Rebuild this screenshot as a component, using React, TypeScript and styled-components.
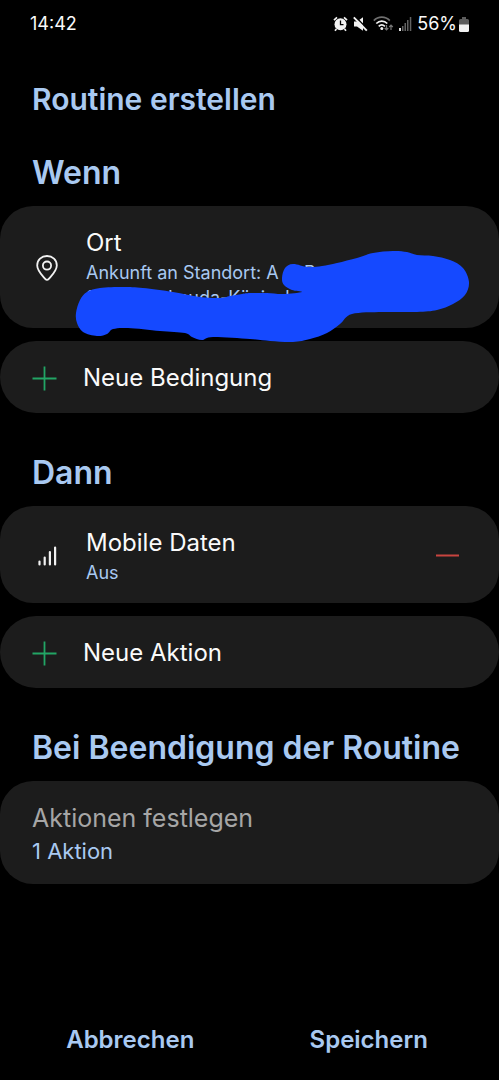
import React from 'react';
import styled, { createGlobalStyle } from 'styled-components';

const GlobalStyle = createGlobalStyle`
  * { box-sizing: border-box; }
  body {
    margin: 0;
    background: #000;
    color: #fafafa;
    font-family: Inter, Roboto, sans-serif;
  }
  button { font-family: inherit; cursor: pointer; }
`;

const Screen = styled.div`
  display: flex;
  flex-direction: column;
  min-height: 100vh;
`;

const StatusBar = styled.header`
  display: flex;
  align-items: center;
  justify-content: space-between;
  height: 48px;
  padding: 0 30px;
  font-size: 18px;
  line-height: 24px;
`;

const StatusIcons = styled.div`
  display: flex;
  align-items: center;
  gap: 5px;
`;

const BatteryLevel = styled.span`
  display: flex;
  align-items: center;
  gap: 2px;
`;

const PageTitle = styled.h1`
  margin: 31px 32px 0;
  color: #a9c9f1;
  font-size: 30px;
  line-height: 40px;
  font-weight: 600;
`;

const Section = styled.section`
  display: flex;
  flex-direction: column;
  gap: 13px;
  margin-top: 40px;
`;

const FirstSection = styled(Section)`
  margin-top: 34px;
`;

const SectionTitle = styled.h2`
  margin: 0 32px;
  color: #a9c9f1;
  font-size: 32px;
  line-height: 40px;
  font-weight: 600;
`;

const Card = styled.div`
  position: relative;
  display: flex;
  align-items: center;
  padding: 20px 32px 18px;
  border-radius: 33px;
  background: #1c1c1c;
`;

const AddButton = styled.button`
  display: flex;
  align-items: center;
  gap: 26px;
  width: 100%;
  padding: 21px 32px 19px;
  border: 0;
  border-radius: 36px;
  background: #1c1c1c;
  color: #fafafa;
  font-size: 24px;
  line-height: 32px;
  text-align: left;
`;

const IconSlot = styled.span`
  display: flex;
  flex: none;
  justify-content: center;
  width: 30px;
  margin-right: 24px;
`;

const Texts = styled.div`
  flex: 1;
  min-width: 0;
`;

const ItemTitle = styled.div<{ $muted?: boolean }>`
  color: ${(p) => (p.$muted ? '#a6a6a6' : '#fafafa')};
  font-size: ${(p) => (p.$muted ? 25 : 24)}px;
  line-height: 34px;
`;

const ItemNote = styled.div<{ $large?: boolean }>`
  color: #a9c9f1;
  font-size: ${(p) => (p.$large ? 22 : 18)}px;
  line-height: ${(p) => (p.$large ? 32 : 25)}px;
  white-space: pre;
`;

const OutcomeCard = styled(Card)`
  padding: 20px 32px 17px;
`;

const RemoveButton = styled.button`
  display: flex;
  padding: 8px;
  border: 0;
  background: none;
`;

const Scribble = styled.svg`
  position: absolute;
  top: 0;
  left: 0;
  z-index: 1;
  overflow: visible;
  pointer-events: none;
`;

const Footer = styled.footer`
  display: flex;
  margin-top: auto;
  padding: 0 11px 20px;
`;

const FooterButton = styled.button`
  flex: 1;
  padding: 0;
  border: 0;
  background: none;
  color: #a9c9f1;
  font-size: 24px;
  line-height: 40px;
  font-weight: 600;
`;

const AlarmIcon = () => (
  <svg width="15" height="16" viewBox="0 0 15 16" aria-label="Wecker">
    <circle cx="7.5" cy="8.3" r="6" fill="#f2f2f2" />
    <path d="M1 4.2 4 1.3M14 4.2 11 1.3M3.4 13l-1.4 1.7M11.6 13l1.4 1.7" stroke="#f2f2f2" strokeWidth="1.7" />
    <path d="M7.5 4.6v4h3" stroke="#000" strokeWidth="1.3" fill="none" />
  </svg>
);

const MuteIcon = () => (
  <svg width="15" height="16" viewBox="0 0 15 16" aria-label="Stumm">
    <path d="M1 5.5h3l6-4.300v13.600l-6-4.300H1z" fill="#f2f2f2" />
    <path d="M2.200.400 15 13.400" stroke="#000" strokeWidth="1.400" />
    <path d="M.800 1.300 13.800 14.600" stroke="#f2f2f2" strokeWidth="1.900" />
  </svg>
);

const WifiIcon = () => (
  <svg width="21" height="16" viewBox="0 0 21 16" fill="none" aria-label="WLAN">
    <path d="M.8 4.6c4.5-4.6 11.5-4.6 16 0" stroke="#6f6f6f" strokeWidth="1.7" />
    <path d="M3.3 7.5c3.2-3.2 7.8-3.2 11 0M5.7 10.3c1.900-1.700 4.300-1.700 6.200 0" stroke="#f2f2f2" strokeWidth="1.7" />
    <circle cx="8.8" cy="12.6" r="1.5" fill="#f2f2f2" />
    <path d="M13.500 9v4.500M11.700 12l1.800 1.900 1.800-1.900M18 14V9.300M16.200 11 18 9.100l1.800 1.900" stroke="#777" strokeWidth="1.2" />
  </svg>
);

const SignalIcon = () => (
  <svg width="13" height="14" viewBox="0 0 13 14" aria-label="Mobilfunk">
    <path d="M0 11h2v3H0z" fill="#e4e4e4" />
    <path d="M3 9h1.500v5H3zM5.500 6H7v8H5.500zM8 3h1.500v11H8zM10.800 0h1.500v14h-1.500z" fill="#626262" />
  </svg>
);

const BatteryIcon = () => (
  <svg width="10" height="15" viewBox="0 0 10 15" aria-hidden="true">
    <path d="M3 0h4v2h1.500A1.500 1.500 0 0 1 10 3.500V8H0V3.500A1.500 1.500 0 0 1 1.500 2H3z" fill="#5c5c5c" />
    <path d="M0 7.500h10v6A1.500 1.500 0 0 1 8.500 15h-7A1.500 1.500 0 0 1 0 13.500z" fill="#f2f2f2" />
  </svg>
);

const PinIcon = () => (
  <svg width="22" height="26" viewBox="0 0 22 26" fill="none" stroke="#f2f2f2" strokeWidth="1.8" aria-hidden="true">
    <path d="M11 1C5.400 1 1.200 5.100 1.200 10.400c0 5.200 4.400 9.300 8.200 13.700.9 1 2.300 1 3.200 0 3.800-4.400 8.200-8.500 8.200-13.700C20.800 5.100 16.600 1 11 1z" />
    <circle cx="11" cy="10.6" r="4.1" />
  </svg>
);

const BarsIcon = () => (
  <svg width="19" height="20" viewBox="0 0 19 20" stroke="#f2f2f2" strokeWidth="2.2" strokeLinecap="round" aria-hidden="true">
    <path d="M1.500 15.500v3M6.700 11.500v7M11.900 6v12.500M17.100 1.500v17" />
  </svg>
);

const PlusIcon = () => (
  <svg width="25" height="25" viewBox="0 0 25 25" stroke="#22a565" strokeWidth="1.8" aria-hidden="true">
    <path d="M12.500.500v24M.500 12.500h24" />
  </svg>
);

const MinusIcon = () => (
  <svg width="23" height="3" viewBox="0 0 23 3" aria-hidden="true">
    <path d="M0 1.500h23" stroke="#c8443f" strokeWidth="2" />
  </svg>
);

const scribbleOutline: [number, number][] = [
  [76, 107], [80, 94], [87, 86], [100, 82], [123, 81], [143, 82], [173, 86], [200, 91], [220, 92],
  [230, 90], [242, 88], [250, 87], [267, 87], [283, 88], [302, 86], [292, 84], [284, 79], [282, 72],
  [285, 62], [293, 58], [308, 61], [322, 60], [337, 57], [357, 52], [373, 47], [393, 45], [407, 46],
  [417, 49], [433, 50], [450, 54], [463, 62], [469, 76], [465, 89], [453, 98], [437, 104],
  [417, 106], [383, 106], [352, 108], [340, 118], [327, 127], [310, 133], [293, 136], [270, 135],
  [250, 133], [213, 131], [202, 134], [192, 131], [185, 127], [160, 125], [128, 122], [113, 123],
  [107, 128], [97, 130], [83, 126], [77, 117],
];

const smoothClosed = (pts: [number, number][]) => {
  const n = pts.length;
  let d = `M${pts[0][0]} ${pts[0][1]}`;
  for (let i = 0; i < n; i++) {
    const a = pts[(i + n - 1) % n];
    const b = pts[i];
    const c = pts[(i + 1) % n];
    const e = pts[(i + 2) % n];
    d += `C${b[0] + (c[0] - a[0]) / 6} ${b[1] + (c[1] - a[1]) / 6} ${c[0] - (e[0] - b[0]) / 6} ${c[1] - (e[1] - b[1]) / 6} ${c[0]} ${c[1]}`;
  }
  return `${d}Z`;
};

export default function App() {
  return (
    <>
      <GlobalStyle />
      <Screen>
        <StatusBar>
          <time>14:42</time>
          <StatusIcons>
            <AlarmIcon />
            <MuteIcon />
            <WifiIcon />
            <SignalIcon />
            <BatteryLevel>
              56%
              <BatteryIcon />
            </BatteryLevel>
          </StatusIcons>
        </StatusBar>

        <PageTitle>Routine erstellen</PageTitle>

        <FirstSection>
          <SectionTitle>Wenn</SectionTitle>
          <Card>
            <IconSlot>
              <PinIcon />
            </IconSlot>
            <Texts>
              <ItemTitle>Ort</ItemTitle>
              <ItemNote>
                {'Ankunft an Standort: A     B\n9              Lauda-Kö  i    h'}
              </ItemNote>
            </Texts>
            <Scribble width="470" height="136" aria-hidden="true">
              <path d={smoothClosed(scribbleOutline)} fill="#1549ff" />
            </Scribble>
          </Card>
          <AddButton type="button">
            <PlusIcon />
            Neue Bedingung
          </AddButton>
        </FirstSection>

        <Section>
          <SectionTitle>Dann</SectionTitle>
          <Card>
            <IconSlot>
              <BarsIcon />
            </IconSlot>
            <Texts>
              <ItemTitle>Mobile Daten</ItemTitle>
              <ItemNote>Aus</ItemNote>
            </Texts>
            <RemoveButton type="button" aria-label="Mobile Daten entfernen">
              <MinusIcon />
            </RemoveButton>
          </Card>
          <AddButton type="button">
            <PlusIcon />
            Neue Aktion
          </AddButton>
        </Section>

        <Section>
          <SectionTitle>Bei Beendigung der Routine</SectionTitle>
          <OutcomeCard>
            <Texts>
              <ItemTitle $muted>Aktionen festlegen</ItemTitle>
              <ItemNote $large>1 Aktion</ItemNote>
            </Texts>
          </OutcomeCard>
        </Section>

        <Footer>
          <FooterButton type="button">Abbrechen</FooterButton>
          <FooterButton type="button">Speichern</FooterButton>
        </Footer>
      </Screen>
    </>
  );
}
